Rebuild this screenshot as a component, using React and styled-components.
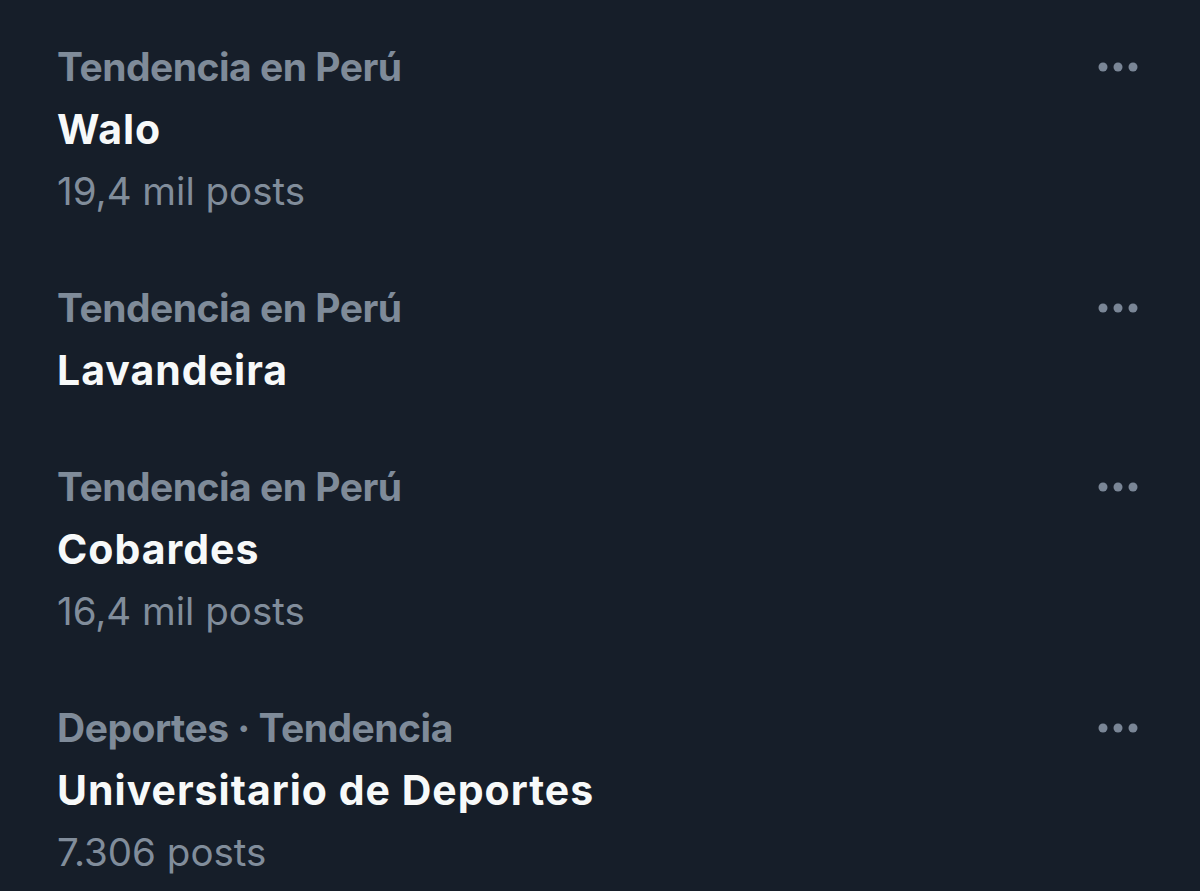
import React from 'react';
import styled, { createGlobalStyle } from 'styled-components';

const GlobalStyle = createGlobalStyle`
  html, body {
    margin: 0;
    padding: 0;
    background: #161e29;
  }
  body {
    font-family: Inter, "Noto Sans", "Liberation Sans", sans-serif;
    -webkit-font-smoothing: antialiased;
  }
`;

const Page = styled.div`
  width: 1200px;
  height: 891px;
  overflow: hidden;
  padding-top: 9px;
  box-sizing: border-box;
  background: #161e29;
`;

const Row = styled.div`
  display: flex;
  align-items: flex-start;
  padding: 27px 62px 28px 57px;
`;

const Info = styled.div`
  flex: 1;
  display: flex;
  flex-direction: column;
`;

const Line = styled.div`
  height: 62px;
  line-height: 62px;
  white-space: nowrap;
`;

const Category = styled(Line)`
  font-size: 39px;
  font-weight: 700;
  color: #7f8b99;
  letter-spacing: -0.5px;
`;

const Title = styled(Line)`
  font-size: 41px;
  font-weight: 700;
  color: #f7f9f9;
  letter-spacing: 1px;
`;

const Count = styled(Line)`
  font-size: 38.5px;
  font-weight: 400;
  color: #818d9b;
`;

const MoreButton = styled.button`
  display: flex;
  align-items: center;
  justify-content: center;
  height: 62px;
  padding: 0;
  background: transparent;
  border: 0;
  cursor: pointer;
`;

const MoreIcon = () => (
  <svg width="40" height="10" viewBox="0 0 40 10">
    <circle cx="5" cy="5" r="4.5" fill="#7a8696" />
    <circle cx="20" cy="5" r="4.5" fill="#7a8696" />
    <circle cx="35" cy="5" r="4.5" fill="#7a8696" />
  </svg>
);

const trends = [
  { category: 'Tendencia en Perú', title: 'Walo', count: '19,4 mil posts' },
  { category: 'Tendencia en Perú', title: 'Lavandeira' },
  { category: 'Tendencia en Perú', title: 'Cobardes', count: '16,4 mil posts' },
  { category: 'Deportes · Tendencia', title: 'Universitario de Deportes', count: '7.306 posts' },
];

const TrendItem = ({ category, title, count }) => (
  <Row>
    <Info>
      <Category>{category}</Category>
      <Title>{title}</Title>
      {count && <Count>{count}</Count>}
    </Info>
    <MoreButton aria-label="Más opciones">
      <MoreIcon />
    </MoreButton>
  </Row>
);

export default function App() {
  return (
    <Page>
      <GlobalStyle />
      {trends.map((t, i) => (
        <TrendItem key={i} {...t} />
      ))}
    </Page>
  );
}
